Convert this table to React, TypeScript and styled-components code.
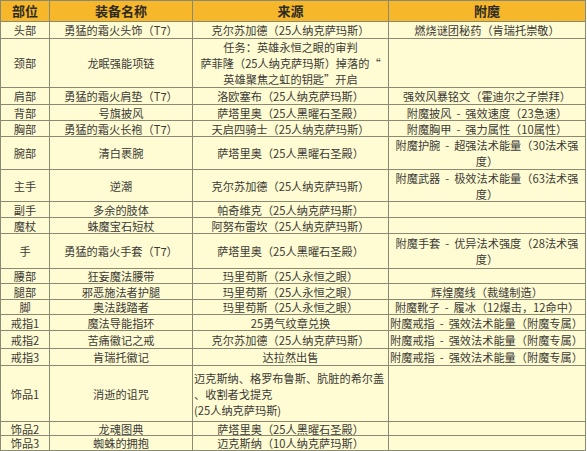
import React from 'react';
import styled, { createGlobalStyle } from 'styled-components';

const GlobalStyle = createGlobalStyle`
  html, body {
    margin: 0;
    padding: 0;
    background: #ffffff;
  }
  body {
    font-family: "Noto Sans CJK SC", "Noto Sans", sans-serif;
    color: #3b3a36;
  }
`;

const COLS = '49px 143px 196px 197px';

const Table = styled.div`
  width: 586px;
  border-top: 1px solid #8a8a74;
  border-left: 1px solid #8a8a74;
  box-sizing: border-box;
`;

const Row = styled.div<{ $h: number; $head?: boolean }>`
  display: grid;
  grid-template-columns: ${COLS};
  height: ${(p) => p.$h}px;
  background-color: ${(p) => (p.$head ? '#f6b72b' : '#fffcd3')};
`;

const Cell = styled.div<{ $align?: 'left' | 'center'; $head?: boolean }>`
  display: flex;
  flex-direction: column;
  justify-content: center;
  align-items: ${(p) => (p.$align === 'left' ? 'flex-start' : 'center')};
  text-align: ${(p) => p.$align || 'center'};
  padding: ${(p) => (p.$align === 'left' ? '0 0 0 1px' : '0')};
  border-right: 1px solid #8a8a74;
  border-bottom: 1px solid #8a8a74;
  box-sizing: border-box;
  font-size: ${(p) => (p.$head ? '13px' : '11.2px')};
  font-weight: ${(p) => (p.$head ? 700 : 400)};
  color: ${(p) => (p.$head ? '#2d2a22' : '#3b3a36')};
  line-height: 16px;
  word-spacing: 2.5px;
  white-space: nowrap;
  overflow: hidden;
`;

interface IRow {
  slot: string;
  item: string;
  source: string[];
  enchant: string[];
  h: number;
  sourceAlign?: 'left' | 'center';
  enchantAlign?: 'left' | 'center';
}

const rows: IRow[] = [
  { slot: '头部', item: '勇猛的霜火头饰（T7）', source: ['克尔苏加德（25人纳克萨玛斯）'], enchant: ['燃烧谜团秘药（肯瑞托崇敬）'], h: 17 },
  {
    slot: '颈部',
    item: '龙眠强能项链',
    source: ['任务：英雄永恒之眼的审判', '萨菲隆（25人纳克萨玛斯）掉落的“', '英雄聚焦之虹的钥匙”开启'],
    enchant: [],
    h: 49,
  },
  { slot: '肩部', item: '勇猛的霜火肩垫（T7）', source: ['洛欧塞布（25人纳克萨玛斯）'], enchant: ['强效风暴铭文（霍迪尔之子崇拜）'], h: 17 },
  { slot: '背部', item: '号旗披风', source: ['萨塔里奥（25人黑曜石圣殿）'], enchant: ['附魔披风 - 强效速度（23急速）'], h: 16 },
  { slot: '胸部', item: '勇猛的霜火长袍（T7）', source: ['天启四骑士（25人纳克萨玛斯）'], enchant: ['附魔胸甲 - 强力属性（10属性）'], h: 16 },
  { slot: '腕部', item: '清白裹腕', source: ['萨塔里奥（25人黑曜石圣殿）'], enchant: ['附魔护腕 - 超强法术能量（30法术强', '度）'], h: 33 },
  { slot: '主手', item: '逆潮', source: ['克尔苏加德（25人纳克萨玛斯）'], enchant: ['附魔武器 - 极效法术能量（63法术强', '度）'], h: 32 },
  { slot: '副手', item: '多余的肢体', source: ['帕奇维克（25人纳克萨玛斯）'], enchant: [], h: 16 },
  { slot: '魔杖', item: '蛛魔宝石短杖', source: ['阿努布雷坎（25人纳克萨玛斯）'], enchant: [], h: 16 },
  { slot: '手', item: '勇猛的霜火手套（T7）', source: ['萨塔里奥（25人黑曜石圣殿）'], enchant: ['附魔手套 - 优异法术强度（28法术强', '度）'], h: 35 },
  { slot: '腰部', item: '狂妄魔法腰带', source: ['玛里苟斯（25人永恒之眼）'], enchant: [], h: 15 },
  { slot: '腿部', item: '邪恶施法者护腿', source: ['玛里苟斯（25人永恒之眼）'], enchant: ['辉煌魔线（裁缝制造）'], h: 16 },
  { slot: '脚', item: '奥法践踏者', source: ['玛里苟斯（25人永恒之眼）'], enchant: ['附魔靴子 - 履冰（12爆击，12命中）'], h: 15 },
  { slot: '戒指1', item: '魔法导能指环', source: ['25勇气纹章兑换'], enchant: ['附魔戒指 - 强效法术能量（附魔专属）'], h: 16, enchantAlign: 'left' },
  { slot: '戒指2', item: '苦痛徽记之戒', source: ['克尔苏加德（25人纳克萨玛斯）'], enchant: ['附魔戒指 - 强效法术能量（附魔专属）'], h: 18, enchantAlign: 'left' },
  { slot: '戒指3', item: '肯瑞托徽记', source: ['达拉然出售'], enchant: ['附魔戒指 - 强效法术能量（附魔专属）'], h: 17, enchantAlign: 'left' },
  {
    slot: '饰品1',
    item: '消逝的诅咒',
    source: ['迈克斯纳、格罗布鲁斯、肮脏的希尔盖', '、收割者戈提克', '(25人纳克萨玛斯)'],
    enchant: [],
    h: 56,
    sourceAlign: 'left',
  },
  { slot: '饰品2', item: '龙魂图典', source: ['萨塔里奥（25人黑曜石圣殿）'], enchant: [], h: 14 },
  { slot: '饰品3', item: '蜘蛛的拥抱', source: ['迈克斯纳（10人纳克萨玛斯）'], enchant: [], h: 15 },
];

const Lines = ({ lines }: { lines: string[] }) => (
  <>
    {lines.map((line, i) => (
      <span key={i}>{line}</span>
    ))}
  </>
);

const App = function () {
  return (
    <>
      <GlobalStyle />
      <Table>
        <Row $h={21} $head>
          <Cell $head>部位</Cell>
          <Cell $head>装备名称</Cell>
          <Cell $head>来源</Cell>
          <Cell $head>附魔</Cell>
        </Row>
        {rows.map((row) => (
          <Row key={row.slot} $h={row.h}>
            <Cell>{row.slot}</Cell>
            <Cell>{row.item}</Cell>
            <Cell $align={row.sourceAlign}>
              <Lines lines={row.source} />
            </Cell>
            <Cell $align={row.enchantAlign}>
              <Lines lines={row.enchant} />
            </Cell>
          </Row>
        ))}
      </Table>
    </>
  );
};

export default App;
